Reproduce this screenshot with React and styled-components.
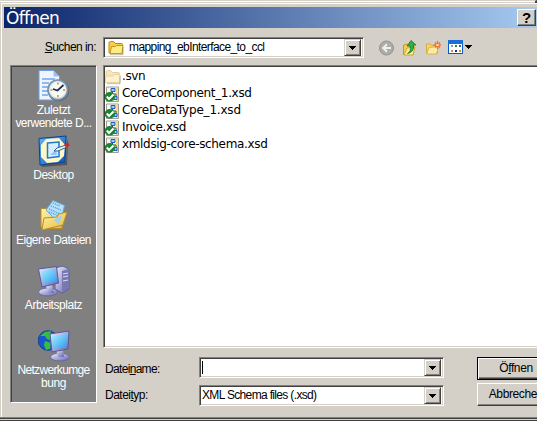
import React from "react";
import styled, { createGlobalStyle, css } from "styled-components";

const Global = createGlobalStyle`
  body { margin: 0; overflow: hidden; background: #d4d0c8; }
  * { box-sizing: border-box; }
`;

const sunken = css`
  border: 1px solid;
  border-color: #808080 #fff #fff #808080;
  box-shadow: inset 1px 1px 0 #404040, inset -1px -1px 0 #d4d0c8;
`;

const Window = styled.div`
  width: 537px;
  height: 421px;
  overflow: hidden;
  display: flex;
  flex-direction: column;
  background: #d4d0c8;
  color: #000;
  font: 12px/13px "Liberation Sans", Arial, sans-serif;
  white-space: nowrap;
`;

const TopFrame = styled.div`
  height: 3px;
  flex: none;
  border-top: 1px solid #d4d0c8;
  border-right: 2px solid #404040;
  box-shadow: inset 0 1px 0 #fff;
`;

const Frame = styled.div`
  height: 414px;
  flex: none;
  margin-left: 1px;
  padding: 3px 0 0 3px;
  border-left: 1px solid #fff;
  border-top: 1px solid #fff;
`;

const BottomFrame = styled.div`
  height: 4px;
  flex: none;
  background: linear-gradient(#808080 0 1px, #404040 1px 2px, #d4d0c8 2px 3px, #404040 3px);
`;

const TitleBar = styled.header`
  height: 21px;
  margin-left: -1px;
  display: flex;
  align-items: center;
  justify-content: space-between;
  padding: 0 1px 0 2px;
  background: linear-gradient(90deg, #0a246a, #a6caf0);
`;

const Title = styled.h1`
  margin: 0;
  padding-top: 1px;
  color: #fff;
  font: 17px/21px "DejaVu Sans", sans-serif;
  letter-spacing: -0.7px;
`;

const HelpButton = styled.button`
  width: 19px;
  height: 17px;
  padding: 0;
  border: 1px solid;
  border-color: #fff #404040 #404040 #fff;
  box-shadow: inset -1px -1px 0 #808080;
  background: #d4d0c8;
  color: #000;
  font: bold 15px/14px "Liberation Sans", sans-serif;
`;

const Toolbar = styled.div`
  height: 21px;
  margin-top: 9px;
  display: flex;
`;

const LookIn = styled.label`
  width: 98px;
  padding: 4px 7px 0 0;
  text-align: right;
  letter-spacing: -0.55px;
`;

const Combo = styled.div`
  ${sunken}
  width: ${(p) => p.$w}px;
  height: 21px;
  padding: 2px 2px 2px ${(p) => p.$left ?? 2}px;
  display: flex;
  align-items: center;
  background: #fff;
`;

const ComboValue = styled.span`
  flex: 1;
  padding-left: ${(p) => p.$pad ?? 1}px;
  letter-spacing: ${(p) => p.$ls ?? 0}px;
`;

const Caret = styled.span`
  flex: 1;
  height: 13px;
  margin-left: 1px;
  border-left: 1px solid #000;
`;

const DropButton = styled.span`
  width: 17px;
  height: 17px;
  display: flex;
  align-items: center;
  justify-content: center;
  border: 1px solid;
  border-color: #d4d0c8 #404040 #404040 #d4d0c8;
  box-shadow: inset 1px 1px 0 #fff, inset -1px -1px 0 #808080;
  background: #d4d0c8;
`;

const Tools = styled.div`
  display: flex;
  align-items: center;
  margin-left: 15px;
  gap: 7px;
`;

const Main = styled.div`
  display: flex;
  margin: 7px 0 0 5px;
`;

const Places = styled.nav`
  ${sunken}
  width: 87px;
  height: 338px;
  flex: none;
  background: #808080;
  color: #fff;
  display: flex;
  flex-direction: column;
  padding-top: 4px;
  box-shadow: inset 1px 1px 0 #404040;
`;

const Place = styled.div`
  height: 65px;
  display: flex;
  flex-direction: column;
  align-items: center;
  text-align: center;
  svg { margin-bottom: 2px; flex: none; }
`;

const PlaceLine = styled.span`
  letter-spacing: ${(p) => p.$ls}px;
`;

const Content = styled.div`
  width: 450px;
  margin-left: 6px;
  flex: none;
`;

const FileList = styled.ul`
  ${sunken}
  height: 283px;
  margin: 0;
  padding: 2px 2px 2px 1px;
  list-style: none;
  background: #fff;
`;

const FileRow = styled.li`
  height: 17px;
  display: flex;
  align-items: center;
  gap: 1px;
  font: 12px/17px "DejaVu Sans", sans-serif;
  letter-spacing: ${(p) => p.$ls}px;
`;

const Form = styled.div`
  display: grid;
  grid-template-columns: 96px 245px 75px;
  grid-template-rows: 25px 24px;
  row-gap: 2px;
  margin-top: 8px;
`;

const FieldLabel = styled.label`
  padding: ${(p) => p.$top}px 0 0 2px;
  letter-spacing: ${(p) => p.$ls}px;
`;

const FieldCell = styled.div`
  padding-top: ${(p) => p.$top}px;
`;

const Button = styled.button`
  width: 78px;
  height: 23px;
  margin: ${(p) => (p.$primary ? 1 : 0)}px 0 0 33px;
  padding: 0;
  border: 1px solid;
  border-color: ${(p) => (p.$primary ? "#000" : "#fff #404040 #404040 #fff")};
  box-shadow: ${(p) => (p.$primary ? "inset 1px 1px 0 #fff, inset -1px -1px 0 #404040, inset -2px -2px 0 #808080" : "inset -1px -1px 0 #808080")};
  background: #d4d0c8;
  color: #000;
  font: 12px/13px "Liberation Sans", sans-serif;
  letter-spacing: -0.4px;
  white-space: nowrap;
`;

const Arrow = () => (
  <svg width="7" height="4" shapeRendering="crispEdges"><path d="M0 0h7v1H6v1H5v1H4v1H3V3H2V2H1V1H0z" /></svg>
);

const Drop = () => <DropButton><Arrow /></DropButton>;

const Folder = ({ pale }) => (
  <svg width="16" height="16" viewBox="0 0 16 16">
    <path d="M1 13V3q0-1.500 1.500-1.500h3L7.500 3.500h6q1 0 1 1V13z" fill={pale ? "#f7e7b8" : "#f5cf4c"} stroke={pale ? "#e3d09c" : "#b98a12"} />
    <path d={pale ? "M.5 13.500V7h7.500l1.500-1.500h5.500v8z" : "M2 13.500l1.500-7h4l1-1h6.500L14 13.500z"} fill={pale ? "#fdf1cf" : "#ffeb83"} stroke={pale ? "#e5d3a1" : "#c5961c"} />
    <path d="M2 14.700h13V7" fill="none" stroke="#807850" strokeOpacity=".5" />
  </svg>
);

const SchemaFile = () => (
  <svg width="16" height="16" viewBox="0 0 16 16">
    <path d="M1.500 1h12v14.500h-12z" fill="#f8f8f0" stroke="#9d9d94" />
    <path d="M11 1.500h2V15h-2z" fill="#f2df87" />
    <path d="M7.500 5v3h3.500v3" fill="none" stroke="#444" />
    <path d="M6 2.500h4v3H6zM9 10.500h3v3H9z" fill="#9cc8ff" stroke="#245cc5" />
    <ellipse cx="4.800" cy="10.800" rx="5.200" ry="4.800" fill="#16852b" />
    <path d="M1.800 10.500L4 13l4.500-4.500" fill="none" stroke="#fff" strokeWidth="2" />
  </svg>
);

const BackIcon = () => (
  <svg width="16" height="16" viewBox="0 0 16 16">
    <circle cx="7.500" cy="8" r="7" fill="#acaca8" stroke="#949490" />
    <path d="M12 8H5M8 4.200L4.200 8 8 11.800" fill="none" stroke="#f0f0ec" strokeWidth="2" />
  </svg>
);

const UpIcon = () => (
  <svg width="16" height="16" viewBox="0 0 16 16">
    <path d="M1.500 14.500V5l4-1 1 1.500h5v9z" fill="#f5ce54" stroke="#c49727" />
    <path d="M2 15l3-7 8-1-2 8z" fill="#ffed91" stroke="#d0a433" />
    <path d="M5.500 13.500q4-2 2.500-7.500H5l4-5.500L14 5h-2.500q1 7-6 8.500z" fill="#35ad3c" stroke="#167728" strokeWidth=".8" />
  </svg>
);

const NewFolderIcon = () => (
  <svg width="16" height="16" viewBox="0 0 16 16">
    <path d="M1.500 13.500V4h4l1 1.500h6v8z" fill="#f7d467" stroke="#d6ae45" />
    <path d="M1.500 14L4 7.500l9.500-1-2 7.500z" fill="#ffeba0" stroke="#dcb44b" />
    <path d="M12.500 1v8M8.500 5h8M10 2.500l5 5M15 2.500l-5 5" stroke="#f36b36" strokeWidth="1.300" />
    <circle cx="12.500" cy="5" r="1.300" fill="#ffe58a" />
  </svg>
);

const ViewIcon = () => (
  <svg width="25" height="15" viewBox="0 0 25 15" shapeRendering="crispEdges">
    <path d="M.5.500h14v13H.5z" fill="#fff" stroke="#0859c5" />
    <path d="M0 0h15v4H0z" fill="#1b6bdc" />
    <path d="M3 5h2v2H3z" fill="#789be8" /><path d="M7 5h2v2H7z" fill="#218f3c" /><path d="M11 5h2v2h-2z" fill="#315fa8" />
    <path d="M3 10h2v2H3z" fill="#ed795b" /><path d="M7 10h2v2H7z" fill="#142b92" /><path d="M11 10h2v2h-2z" fill="#c49227" />
    <path d="M17 5h7v1h-1v1h-1v1h-1v1h-1V8h-1V7h-1V6h-1z" />
  </svg>
);

const Defs = () => (
  <defs>
    <linearGradient id="screen" x2="1" y2="1"><stop stopColor="#a8efff" /><stop offset="1" stopColor="#279bf0" /></linearGradient>
    <linearGradient id="metal" x2="1" y2="1"><stop stopColor="#f2f2ff" /><stop offset="1" stopColor="#6262aa" /></linearGradient>
    <linearGradient id="blue" x2="1" y2="1"><stop stopColor="#65b5f7" /><stop offset="1" stopColor="#0752b9" /></linearGradient>
    <linearGradient id="gold" x2="1" y2="1"><stop stopColor="#fff5a8" /><stop offset="1" stopColor="#e9b83a" /></linearGradient>
  </defs>
);

const Recent = () => (
  <svg width="32" height="32" viewBox="0 0 32 32">
    <Defs />
    <path d="M1 .5h14.500l6 6V30H1z" fill="#eef5ff" stroke="#6c9ddd" />
    <path d="M15.500.500v6h6z" fill="#96c1f5" />
    <path d="M4 9h13M4 13h7M4 17h6M4 21h6M4 25h6" stroke="#8fb9ef" strokeWidth="2" />
    <circle cx="20.500" cy="20.500" r="10.800" fill="#656a72" />
    <circle cx="19.800" cy="19.800" r="9.800" fill="#dce9ef" stroke="#7194ab" strokeWidth="1.600" />
    <circle cx="19.800" cy="19.800" r="7.500" fill="#f8fbf5" />
    <path d="M15 19l4.500 1.500 6-5.500" fill="none" stroke="#222c50" strokeWidth="1.700" />
    <path d="M20 12.500v2M20 25v2M12.500 20h2M25 20h2" stroke="#e77a37" strokeWidth="1.500" />
  </svg>
);

const DesktopIcon = () => (
  <svg width="32" height="32" viewBox="0 0 32 32">
    <path d="M3 30l25-3 1-22 1 1-1 24-25 2z" fill="#555" />
    <path d="M1 3.500L28 1l-1 26-25 3z" fill="url(#blue)" stroke="#064298" />
    <path d="M8 4l13-1 6 7-1 11-6 6-11 1-6-6V10z" fill="#fff7c4" />
    <path d="M9.500 8L21 7v14.500L9.500 23z" fill="#d7eeff" stroke="#2375cf" strokeWidth="1.500" />
    <path d="M12 20h7l-1-6z" fill="#8fc9fa" />
    <path d="M16 16l3-3 9-3 1 2-9 4z" fill="#eef4fc" stroke="#32649c" />
    <path d="M27 11l4-2" stroke="#c92c25" strokeWidth="3.500" />
  </svg>
);

const Documents = () => (
  <svg width="32" height="32" viewBox="0 0 32 32">
    <path d="M3 8.500h7l2 3h12v17H5l-2-2z" fill="url(#gold)" stroke="#bd8d24" />
    <path d="M8 10L15 .5l11.500 5L22 24z" fill="#b7e2ff" stroke="#68a9e3" />
    <path d="M15 3l7 3M13 6l10 4M11 9l11 5M11 12l10 4" stroke="#4d99dc" strokeWidth="1.500" strokeDasharray="1 1" />
    <path d="M4 30l2-12 13-1 2-3 8-2-4 13z" fill="url(#gold)" stroke="#bc8e26" />
    <path d="M16 20l5 5 3-10z" fill="#9bd3f7" />
  </svg>
);

const Monitor = ({ network }) => (
  <g>
    <ellipse cx={network ? 22 : 10} cy="27" rx="9.500" ry="4" fill="url(#metal)" stroke="#6767a5" />
    <path d={network ? "M18 19h7l1 8h-6z" : "M8 21l6-1 2 8h-6z"} fill="url(#metal)" />
    <path d={network ? "M12 4l19-3-1 18-16 3z" : "M.5 4l18-2.500 2 16.500-16.500 4z"} fill="url(#metal)" stroke="#5757a5" />
    <path d={network ? "M14 6l15-2-1 13-13 2z" : "M3 6l14-2 2 12-13 3z"} fill="url(#screen)" />
  </g>
);

const Computer = () => (
  <svg width="32" height="32" viewBox="0 0 32 32">
    <path d="M17 3l8-2 6 3v20l-7 4-7-4z" fill="url(#metal)" stroke="#6060a5" />
    <path d="M24 6v21l7-4V4z" fill="#7878b2" />
    <path d="M25 9l5-1M25 12l5-1M25 16l5-1" stroke="#ddddf7" />
    <Monitor />
  </svg>
);

const Network = () => (
  <svg width="32" height="32" viewBox="0 0 32 32">
    <circle cx="10" cy="10.500" r="9.800" fill="#1857c9" stroke="#173d92" />
    <path d="M2 6l5-4 6-1-1 3 3 3-3 3-3-1-2-3zM7 11l6 2-1 6-4 1-2-5z" fill="#35bf3f" />
    <Monitor network />
  </svg>
);

const places = [
  { icon: <Recent />, lines: [["Zuletzt", -0.35], ["verwendete D...", -0.52]] },
  { icon: <DesktopIcon />, lines: [["Desktop", -0.5]] },
  { icon: <Documents />, lines: [["Eigene Dateien", -0.5]] },
  { icon: <Computer />, lines: [["Arbeitsplatz", -0.45]] },
  { icon: <Network />, lines: [["Netzwerkumge", -0.65], ["bung", -0.4]] },
];

const files = [
  [".svn", -0.4],
  ["CoreComponent_1.xsd", -0.33],
  ["CoreDataType_1.xsd", -0.2],
  ["Invoice.xsd", -0.34],
  ["xmldsig-core-schema.xsd", -0.34],
];

export default function App() {
  return (
    <Window>
      <Global />
      <TopFrame />
      <Frame>
        <TitleBar><Title>Öffnen</Title><HelpButton>?</HelpButton></TitleBar>
        <Toolbar>
          <LookIn><u>S</u>uchen in:</LookIn>
          <Combo $w={261} $left={4}>
            <Folder />
            <ComboValue $pad={5} $ls={-0.59}>mapping_ebInterface_to_ccl</ComboValue>
            <Drop />
          </Combo>
          <Tools><BackIcon /><UpIcon /><NewFolderIcon /><ViewIcon /></Tools>
        </Toolbar>
        <Main>
          <Places>
            {places.map((p) => (
              <Place key={p.lines[0][0]}>
                {p.icon}
                {p.lines.map(([text, ls]) => <PlaceLine key={text} $ls={ls}>{text}</PlaceLine>)}
              </Place>
            ))}
          </Places>
          <Content>
            <FileList>
              {files.map(([name, ls], i) => (
                <FileRow key={name} $ls={ls}>{i === 0 ? <Folder pale /> : <SchemaFile />}{name}</FileRow>
              ))}
            </FileList>
            <Form>
              <FieldLabel $top={7} $ls={-0.68}>Datei<u>n</u>ame:</FieldLabel>
              <FieldCell $top={1}><Combo $w={245} $left={1}><Caret /><Drop /></Combo></FieldCell>
              <Button $primary>Ö<u>f</u>fnen</Button>
              <FieldLabel $top={6} $ls={-0.5}>Datei<u>t</u>yp:</FieldLabel>
              <FieldCell $top={2}><Combo $w={245} $left={1}><ComboValue $ls={-0.66}>XML Schema files (.xsd)</ComboValue><Drop /></Combo></FieldCell>
              <Button>Abbrechen</Button>
            </Form>
          </Content>
        </Main>
      </Frame>
      <BottomFrame />
    </Window>
  );
}
